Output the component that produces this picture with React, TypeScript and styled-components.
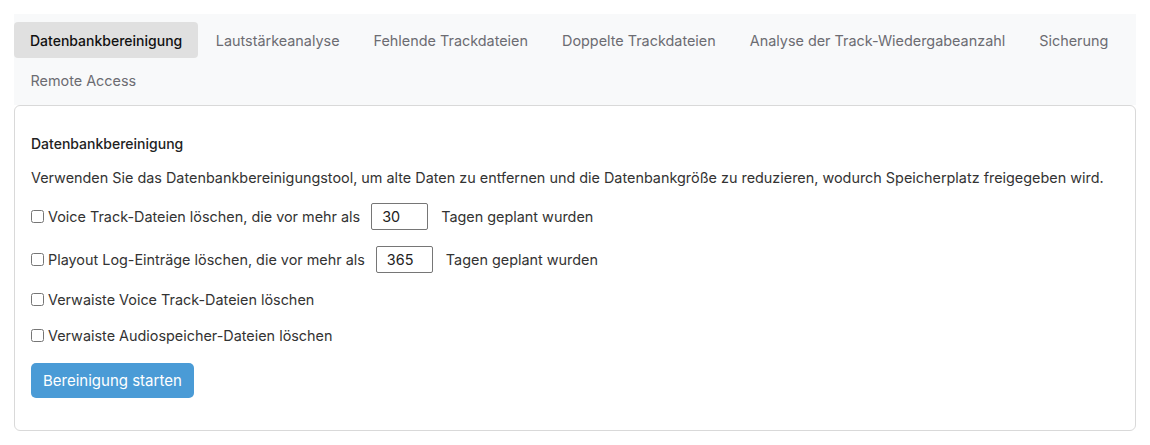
import { useState } from "react";
import styled, { createGlobalStyle } from "styled-components";

const GlobalStyle = createGlobalStyle`
  body {
    margin: 0;
    background: #ffffff;
    font-family: Inter, "Liberation Sans", sans-serif;
    color: #212529;
  }
`;

const Page = styled.div`
  padding: 14px;
`;

const TabBar = styled.div`
  display: flex;
  flex-wrap: wrap;
  column-gap: 1px;
  row-gap: 4px;
  padding: 8px 0 7px;
  background: #f8f9fa;
`;

const Tab = styled.button<{ $active?: boolean }>`
  border: none;
  border-radius: 4px;
  padding: 0 ${(p) => (p.$active ? "16px" : "16.5px")};
  height: 36px;
  font-family: inherit;
  font-size: ${(p) => (p.$active ? "14px" : "14.4px")};
  font-weight: ${(p) => (p.$active ? 500 : 400)};
  color: ${(p) => (p.$active ? "#111" : "#6c6c72")};
  background: ${(p) => (p.$active ? "#e0e0e0" : "transparent")};
  cursor: pointer;
`;

const Panel = styled.div`
  border: 1px solid #d9d9d9;
  border-radius: 6px;
  padding: 29px 16px 32px;
  display: flex;
  flex-direction: column;
  align-items: flex-start;
`;

const Title = styled.div`
  font-size: 14px;
  font-weight: 500;
  color: #222;
`;

const Description = styled.p`
  margin: 17px 0 0;
  font-size: 14.4px;
  color: #333;
`;

const OptionRow = styled.label<{ $space: number }>`
  display: flex;
  align-items: center;
  margin-top: ${(p) => p.$space}px;
  font-size: 14.4px;
  color: #333;
  height: 27px;
`;

const Check = styled.input`
  width: 13px;
  height: 13px;
  margin: 0 4px 0 0;
`;

const DaysInput = styled.input`
  width: 57px;
  height: 27px;
  box-sizing: border-box;
  margin: 0 13px 0 11px;
  padding: 0 10px;
  border: 1px solid #767676;
  border-radius: 2px;
  font-family: inherit;
  font-size: 14.4px;
  color: #222;
`;

const StartButton = styled.button`
  margin-top: 14px;
  height: 35px;
  padding: 0 12px;
  border: none;
  border-radius: 5px;
  background: #4a9bd6;
  color: #fff;
  font-family: inherit;
  font-size: 15px;
  cursor: pointer;
`;

const tabs = [
  "Datenbankbereinigung",
  "Lautstärkeanalyse",
  "Fehlende Trackdateien",
  "Doppelte Trackdateien",
  "Analyse der Track-Wiedergabeanzahl",
  "Sicherung",
  "Remote Access",
];

export default function App() {
  const [active, setActive] = useState(0);
  const [voiceDays, setVoiceDays] = useState("30");
  const [logDays, setLogDays] = useState("365");

  return (
    <Page>
      <GlobalStyle />
      <TabBar>
        {tabs.map((t, i) => (
          <Tab key={t} $active={i === active} onClick={() => setActive(i)}>
            {t}
          </Tab>
        ))}
      </TabBar>
      <Panel>
        <Title>Datenbankbereinigung</Title>
        <Description>
          Verwenden Sie das Datenbankbereinigungstool, um alte Daten zu entfernen und die
          Datenbankgröße zu reduzieren, wodurch Speicherplatz freigegeben wird.
        </Description>
        <OptionRow $space={17}>
          <Check type="checkbox" />
          Voice Track-Dateien löschen, die vor mehr als
          <DaysInput value={voiceDays} onChange={(e) => setVoiceDays(e.target.value)} />
          Tagen geplant wurden
        </OptionRow>
        <OptionRow $space={16}>
          <Check type="checkbox" />
          Playout Log-Einträge löschen, die vor mehr als
          <DaysInput value={logDays} onChange={(e) => setLogDays(e.target.value)} />
          Tagen geplant wurden
        </OptionRow>
        <OptionRow $space={13}>
          <Check type="checkbox" />
          Verwaiste Voice Track-Dateien löschen
        </OptionRow>
        <OptionRow $space={9}>
          <Check type="checkbox" />
          Verwaiste Audiospeicher-Dateien löschen
        </OptionRow>
        <StartButton>Bereinigung starten</StartButton>
      </Panel>
    </Page>
  );
}
